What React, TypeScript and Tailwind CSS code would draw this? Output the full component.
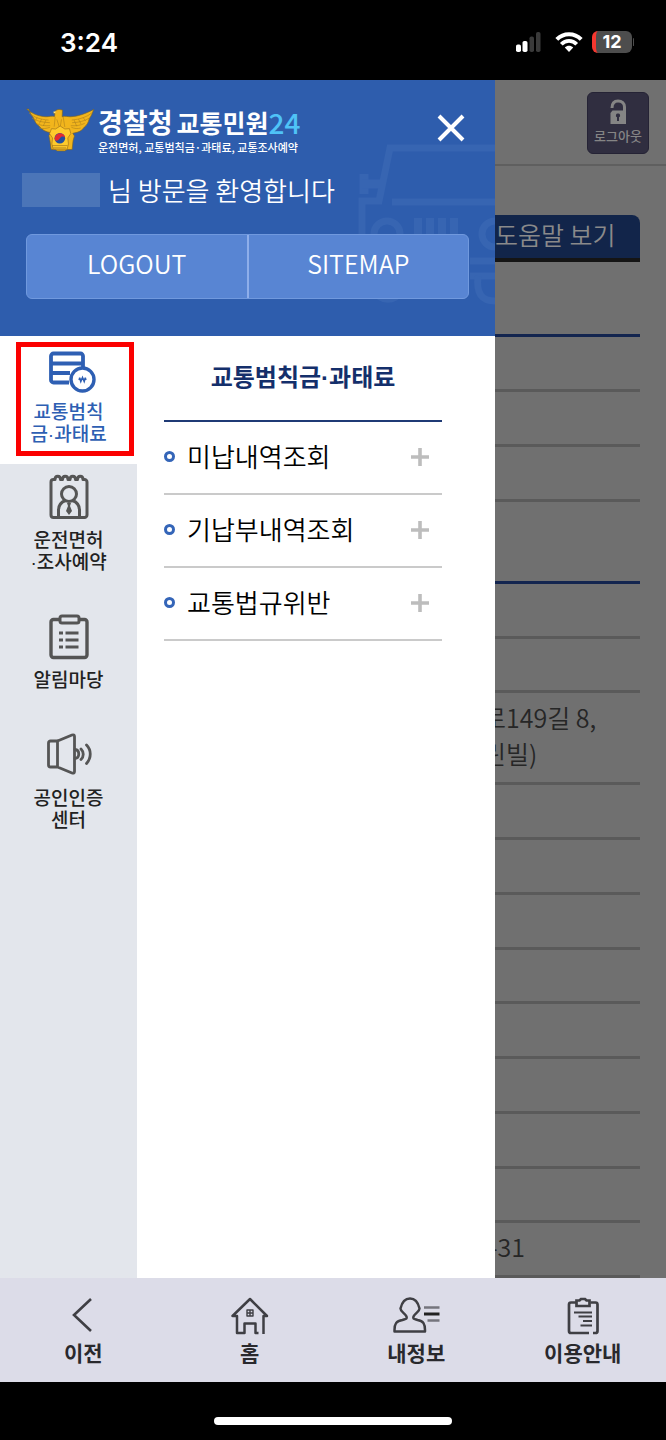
import type { ReactNode } from "react";

function SignalIcon() {
  return (
    <svg className="h-5 w-[30px]" viewBox="0 0 30 20" aria-hidden="true">
      <rect x="0" y="12.500" width="5" height="7.500" rx="1.800" fill="#fff" />
      <rect x="6.500" y="9" width="5" height="11" rx="1.800" fill="#fff" />
      <rect x="13.500" y="4.500" width="4.500" height="15.500" rx="1.800" fill="#3a3a3a" />
      <rect x="20" y="0" width="4.500" height="20" rx="1.800" fill="#3a3a3a" />
    </svg>
  );
}

function WifiIcon() {
  return (
    <svg className="h-5 w-7" viewBox="0 0 28 20" fill="none" stroke="#fff" aria-hidden="true">
      <path d="M1.800 7.400C8.600.4 19.400.4 26.200 7.400" strokeWidth="4" />
      <path d="M6.300 12.200C10.600 7.700 17.400 7.700 21.700 12.200" strokeWidth="3.800" />
      <path d="M14 20l-4.200-4.500c2.400-2.300 6-2.300 8.400 0z" fill="#fff" stroke="none" />
    </svg>
  );
}

function EagleLogo() {
  return (
    <svg className="h-11 w-[69px] shrink-0" viewBox="78 68 208 132" aria-hidden="true">
      <path
        d="M80 71c16 14 36 22 58 23 10 0 17-3 26-1l1-8-4-2c5-8 13-13 22-10l5 1-1 20c9-3 16 0 25 0 22-1 43-8 70-22-4 12-8 21-13 27-3 13-8 21-15 26-6 9-14 14-22 16l-13 3 5 8-4 14-3 27h-15l-7 4h-22l-7-4h-12l-4-27-3-15 5-9c-15-2-26-9-34-19-8-6-14-14-17-25-7-8-11-16-15-27z"
        fill="#f2b51c"
        stroke="#7d6425"
        strokeWidth="2"
      />
      <path
        d="M87 82c16 15 34 20 59 22M96 98c14 9 31 13 54 14M108 114c12 6 25 8 43 7M118 128c10 3 20 2 32-2M277 82c-15 13-37 20-61 22M269 98c-14 9-31 13-52 14M255 114c-12 6-26 8-42 7M243 128c-9 3-19 2-28-2M166 94l-3 30M190 94l5 31M171 102l7 22M185 102l-4 23M112 96l-6 10M125 101l-7 14M138 104l-8 18M250 96l8 11M236 101l8 15M223 104l8 19"
        fill="none"
        stroke="#b5851c"
        strokeWidth="2"
      />
      <path d="M155 130l12 1 14-9 14 9 14-1 4 15-9 13 2 18-4 16h-42l-4-16 2-18-9-13z" fill="#ffca2b" stroke="#9c711c" strokeWidth="2" />
      <path d="M157 181h46M160 188h39" stroke="#9c711c" strokeWidth="2" />
      <circle cx="180" cy="159" r="16" fill="#23509f" />
      <path d="M165 164a16 16 0 1 1 31-8c-5-3-11-4-15 2-4 7-12 11-16 6z" fill="#e62a2f" />
      <path d="M161 78l8 1-7 5z" fill="#fff0a0" />
    </svg>
  );
}

function CarWatermark() {
  return (
    <svg
      className="pointer-events-none absolute right-0 top-[60px] h-[166px] w-[137px]"
      viewBox="0 0 137 166"
      fill="none"
      stroke="#3765b2"
      strokeWidth="7"
      aria-hidden="true"
    >
      <path d="M137 8H32L21 61H4v90" />
      <path d="M6 34v20" strokeWidth="9" />
      <path d="M4 44h18" strokeWidth="9" />
      <path d="M34 62h103M112 121h25M112 136h25" />
      <circle cx="29" cy="94" r="13" />
      <path d="M60 78v30M72 78v30M84 78v30M96 78v30" strokeWidth="8" />
      <circle cx="137" cy="94" r="13" />
      <path d="M18 151c2 11 21 11 24 0M120 136c-2 18 4 25 17 25" />
    </svg>
  );
}

function FineIcon() {
  return (
    <svg className="size-12 overflow-visible" viewBox="0 0 48 48" fill="none" stroke="currentColor" strokeWidth="3.800" aria-hidden="true">
      <path d="M24 38.500H8.500A2.500 2.500 0 0 1 6 36V12a2.500 2.500 0 0 1 2.500-2.500h27A2.500 2.500 0 0 1 38 12v12M6 19.500h32M6 29h19" />
      <circle cx="37.500" cy="35.500" r="11.500" strokeWidth="3.400" />
      <path d="M34.500 33.500l1.300 4 1.700-4 1.700 4 1.300-4M33.500 35.300h8" strokeWidth="1.500" />
    </svg>
  );
}

function LicenseIcon() {
  return (
    <svg className="size-12" viewBox="0 0 48 48" fill="none" stroke="currentColor" strokeWidth="3" strokeLinejoin="round" aria-hidden="true">
      <path d="M10 7.500H8.500A2.500 2.500 0 0 0 6 10v33a2.500 2.500 0 0 0 2.500 2.500h31A2.500 2.500 0 0 0 42 43V10a2.500 2.500 0 0 0-2.500-2.500H38c0-4.500-5.500-4.500-5.500 0h-2c0-4.500-5.500-4.500-5.500 0h-2c0-4.500-5.500-4.500-5.500 0h-2c0-4.500-5.500-4.500-5.500 0z" />
      <circle cx="24" cy="22" r="7.500" />
      <path d="M13.500 45v-7c0-5 3-8 7-9.500M34.500 45v-7c0-5-3-8-7-9.500" />
      <path d="M22 31h4l-1 3 2 5-3 4-3-4 2-5z" fill="currentColor" stroke="none" />
    </svg>
  );
}

function NoticeIcon() {
  return (
    <svg className="size-12" viewBox="0 0 48 48" fill="none" stroke="currentColor" strokeWidth="3.400" aria-hidden="true">
      <path d="M14 7.500H8.500A2.500 2.500 0 0 0 6 10v33a2.500 2.500 0 0 0 2.500 2.500h31A2.500 2.500 0 0 0 42 43V10a2.500 2.500 0 0 0-2.500-2.500H34" />
      <rect x="15" y="4" width="19" height="7" rx="2" strokeWidth="3" />
      <path d="M14 21h4M20.500 21h13M14 28h4M20.500 28h13M14 35h4M20.500 35h13" strokeWidth="3" />
    </svg>
  );
}

function SpeakerIcon() {
  return (
    <svg className="size-12" viewBox="0 0 48 48" fill="none" stroke="currentColor" strokeWidth="2.800" strokeLinejoin="round" strokeLinecap="round" aria-hidden="true">
      <path d="M12.500 11H5.500a2 2 0 0 0-2 2v22a2 2 0 0 0 2 2h7zM12.500 11L27 5c1.500-.5 2.500 0 2.500 1.500v35c0 1.500-1 2-2.500 1.500l-14.500-6" />
      <path d="M30 19.500c5 .5 5 8.500 0 9M36 19c3 3 3 7.500 0 10.500M41.500 15c5 5 5 13 0 18.500" />
    </svg>
  );
}

function PersonIcon() {
  return (
    <svg className="h-10 w-12" viewBox="0 0 48 40" fill="none" stroke="#3f3f44" strokeWidth="2.500" strokeLinejoin="round" aria-hidden="true">
      <path d="M14.500 20.500C13 17 8.500 16 8.500 12.500 10 6 13 2.500 18 2.500s8 3.500 9.500 10c0 3.500-4.500 4.500-6 8-1 2.500 1 2.500 4 3.500 6 1 7.500 4 7.500 10v1.500H2.500V34c0-6 1.500-9 8-10 3-1 5-1 4-3.500z" />
      <path d="M32 11.500h15.500M35.500 24.500h12" stroke="#75757d" />
      <path d="M32 18h15.500" stroke="#222" strokeWidth="3" />
    </svg>
  );
}

function HomeIcon() {
  return (
    <svg className="h-10 w-12" viewBox="0 0 48 40" fill="none" stroke="#3f3f44" strokeWidth="2.500" strokeLinejoin="round" aria-hidden="true">
      <path d="M37.500 38V20H41L24 3 6.500 20H11v17h7.500v-9.500h11V37h3" />
      <path d="M21 14h6v6h-6zM24 14v6M21 17h6" strokeWidth="1.400" />
    </svg>
  );
}

function GuideIcon() {
  return (
    <svg className="h-10 w-12" viewBox="0 0 48 40" fill="none" stroke="#3f3f44" strokeWidth="2.700" aria-hidden="true">
      <path d="M17 6.500h-5a2 2 0 0 0-2 2V35a2 2 0 0 0 2 2h18M34 37h2.500a2 2 0 0 0 2-2V8.500a2 2 0 0 0-2-2h-5" />
      <path d="M17.500 4.500h3l1.500-1.500h4l1.500 1.500h3V10h-13z" />
      <path d="M15 16.500h18M19.500 20.500H33M24 25H33M21.500 29.500H33" strokeWidth="2.200" />
    </svg>
  );
}

function BackIcon() {
  return (
    <svg className="h-10 w-12" viewBox="0 0 48 40" fill="none" stroke="#3f3f44" strokeWidth="2.600" aria-hidden="true">
      <path d="M32 3L15 19l17 16" />
    </svg>
  );
}

function UnlockIcon() {
  return (
    <svg className="h-[26px] w-5" viewBox="0 0 20 26" aria-hidden="true">
      <path d="M4 9C4 4 6.500 2 10 2c4 0 6.500 2.500 6.500 6v5" fill="none" stroke="#858585" strokeWidth="3" />
      <path d="M2.500 14l2-2.500h11l2.500 1V25H2.500z" fill="#858585" />
      <path d="M10 14.500a2 2 0 0 1 1 3.800V22H9v-3.700a2 2 0 0 1 1-3.800z" fill="#302e40" />
    </svg>
  );
}

const tabs: { lines: string[]; icon: ReactNode; active?: boolean }[] = [
  { lines: ["교통범칙", "금·과태료"], icon: <FineIcon />, active: true },
  { lines: ["운전면허", "·조사예약"], icon: <LicenseIcon /> },
  { lines: ["알림마당"], icon: <NoticeIcon /> },
  { lines: ["공인인증", "센터"], icon: <SpeakerIcon /> },
];

const menu = ["미납내역조회", "기납부내역조회", "교통법규위반"];

const bottomItems: { label: string; icon: ReactNode }[] = [
  { label: "이전", icon: <BackIcon /> },
  { label: "홈", icon: <HomeIcon /> },
  { label: "내정보", icon: <PersonIcon /> },
  { label: "이용안내", icon: <GuideIcon /> },
];

function StatusBar() {
  return (
    <div className="flex h-20 items-center justify-between bg-black pl-[60px] pr-8 pt-1 text-white">
      <span className="font-['Inter'] text-[26px] font-semibold">3:24</span>
      <div className="flex items-center gap-[9px]">
        <SignalIcon />
        <WifiIcon />
        <div className="flex items-center gap-px">
          <span className="flex h-[22px] w-[40px] items-center justify-center overflow-hidden rounded-md border-l-4 border-[#f5372f] bg-[#4d4d4d] pr-1 font-['Inter'] text-lg font-bold">
            12
          </span>
          <span className="h-2 w-px rounded-full bg-[#4d4d4d]" />
        </div>
      </div>
    </div>
  );
}

function DrawerHeader() {
  return (
    <header className="relative overflow-hidden bg-[#2e5dad] px-[26px] pb-[37px] pt-6 text-white">
      <CarWatermark />
      <div className="relative flex items-start justify-between">
        <div className="flex items-center gap-[3px]">
          <EagleLogo />
          <div className="pt-px">
            <h1 className="flex items-center text-[25px] font-bold leading-[34px]">
              <span className="text-[27px]">경찰청</span>
              <span className="ml-1">교통민원</span>
              <span className="text-[28px] font-medium text-[#4fc3f7]">24</span>
            </h1>
            <p className="text-[11px] font-medium leading-4">운전면허, 교통범칙금·과태료, 교통조사예약</p>
          </div>
        </div>
        <button type="button" aria-label="닫기" className="mt-[6px] p-1">
          <svg className="size-7" viewBox="0 0 28 28" stroke="#fff" strokeWidth="4" aria-hidden="true">
            <path d="M2 2l24 24M26 2L2 26" />
          </svg>
        </button>
      </div>
      <p className="relative -ml-1 mt-[17px] flex items-center gap-2 text-[26px] font-[350] leading-9">
        <span className="h-[34px] w-[78px] bg-[#4b75b8]" />
        님 방문을 환영합니다
      </p>
      <div className="relative mt-[26px] flex h-[65px] rounded-md border border-[#7099de] bg-[#5885d3] text-[25px] font-[350]">
        <button type="button" className="flex-1 border-r-2 border-[#8eaeea] pb-1.5">
          LOGOUT
        </button>
        <button type="button" className="flex-1 pb-1.5">
          SITEMAP
        </button>
      </div>
    </header>
  );
}

function SideTabs() {
  return (
    <nav className="w-[137px] shrink-0 bg-[#e3e6ec] font-['Liberation_Sans','Noto_Sans_CJK_KR',sans-serif]">
      {tabs.map((tab) => (
        <a
          key={tab.lines[0]}
          href="#"
          className={
            tab.active
              ? "relative flex flex-col items-center gap-[10px] bg-white pb-[18px] pt-2 text-[#2e5fb3]"
              : "flex flex-col items-center gap-[10px] pb-[30px] pt-2 text-[#555]"
          }
        >
          {tab.icon}
          <span
            className={
              tab.active
                ? "text-center text-[19px] font-medium leading-[22px]"
                : "text-center text-[19px] font-medium leading-[22px] text-[#222]"
            }
          >
            {tab.lines.map((line) => (
              <span key={line} className="block">
                {line}
              </span>
            ))}
          </span>
          {tab.active && <span className="absolute bottom-2 left-4 right-[3px] top-1.5 border-5 border-[#fb0000]" />}
        </a>
      ))}
    </nav>
  );
}

function MenuPanel() {
  return (
    <section className="flex-1 bg-white pl-[27px] pr-[53px]">
      <h2 className="flex h-[86px] items-center justify-center border-b-2 border-[#1f3a75] font-['Liberation_Sans','Noto_Sans_CJK_KR',sans-serif] text-2xl font-bold text-[#142f6b]">
        교통범칙금·과태료
      </h2>
      <ul>
        {menu.map((item) => (
          <li key={item} className="border-b-2 border-[#cacaca]">
            <button type="button" className="flex h-[71px] w-full items-center gap-3 pb-0.5 pr-[13px] text-left">
              <span className="size-[11px] rounded-full border-3 border-[#3465b8]" />
              <span className="flex-1 pb-[3px] text-[26px] font-[350] text-black">{item}</span>
              <svg className="size-[18px]" viewBox="0 0 18 18" stroke="#bdbdbd" strokeWidth="3.600" aria-hidden="true">
                <path d="M9 0v18M0 9h18" />
              </svg>
            </button>
          </li>
        ))}
      </ul>
    </section>
  );
}

function DimmedPage() {
  return (
    <section className="flex w-[171px] shrink-0 flex-col overflow-hidden bg-[#707070] text-[25px] font-[350] text-[#262626]">
      <div className="flex h-[86px] items-start justify-end border-b-2 border-[#5f5f5f] pr-[17px] pt-3">
        <button type="button" className="flex h-[62px] w-[62px] flex-col items-center rounded-md border border-[#252335] bg-[#302e40] pt-1.5 text-[#858585]">
          <UnlockIcon />
          <span className="whitespace-nowrap text-[13px] font-medium leading-[22px]">로그아웃</span>
        </button>
      </div>
      <div className="mr-[26px] flex flex-1 flex-col">
        <button type="button" className="mt-[49px] h-[47px] whitespace-nowrap rounded-tr-lg border-b-4 border-[#151515] bg-[#12254a] pb-1 text-left text-[25px] font-[350] text-[#8a8a8a]">
          도움말 보기
        </button>
        <div className="mt-[72px] h-[3px] bg-[#13254f]" />
        <ul>
          <li className="h-[55px] border-b-3 border-[#5a5a5a]" />
          <li className="h-[55px] border-b-3 border-[#5a5a5a]" />
          <li className="h-[55px] border-b-3 border-[#5a5a5a]" />
        </ul>
        <div className="mt-[79px] h-[3px] bg-[#13254f]" />
        <ul className="flex flex-1 flex-col whitespace-nowrap">
          <li className="flex-1 border-b-3 border-[#5a5a5a]" />
          <li className="flex-1 border-b-3 border-[#5a5a5a]" />
          <li className="h-[92px] border-b-3 border-[#5a5a5a] pt-1.5 leading-9">
            <span className="-ml-3 block">로149길 8,</span>
            <span className="-ml-3 block">린빌)</span>
          </li>
          <li className="flex-1 border-b-3 border-[#5a5a5a]" />
          <li className="flex-1 border-b-3 border-[#5a5a5a]" />
          <li className="flex-1 border-b-3 border-[#5a5a5a]" />
          <li className="flex-1 border-b-3 border-[#5a5a5a]" />
          <li className="flex-1 border-b-3 border-[#5a5a5a]" />
          <li className="flex-1 border-b-3 border-[#5a5a5a]" />
          <li className="flex-1 border-b-3 border-[#5a5a5a]" />
          <li className="flex-1 border-b-3 border-[#5a5a5a]" />
          <li className="flex flex-1 items-center border-b-3 border-[#5a5a5a]">
            <span className="-ml-1.5 block pb-1">-31</span>
          </li>
        </ul>
      </div>
    </section>
  );
}

export default function App() {
  return (
    <div className="flex min-h-screen flex-col bg-black font-['Noto_Sans_CJK_KR',sans-serif]">
      <StatusBar />
      <main className="flex flex-1">
        <div className="flex min-w-0 flex-1 flex-col">
          <DrawerHeader />
          <div className="flex flex-1">
            <SideTabs />
            <MenuPanel />
          </div>
        </div>
        <DimmedPage />
      </main>
      <nav className="grid grid-cols-4 bg-[#dcdce8]">
        {bottomItems.map((item) => (
          <a key={item.label} href="#" className="flex flex-col items-center gap-1 pb-[18px] pt-[18px] text-[#29292d]">
            {item.icon}
            <span className="text-[21px] font-bold leading-6">{item.label}</span>
          </a>
        ))}
      </nav>
      <div className="flex h-[58px] items-center justify-center pt-5">
        <span className="h-2 w-[238px] rounded-full bg-white" />
      </div>
    </div>
  );
}
